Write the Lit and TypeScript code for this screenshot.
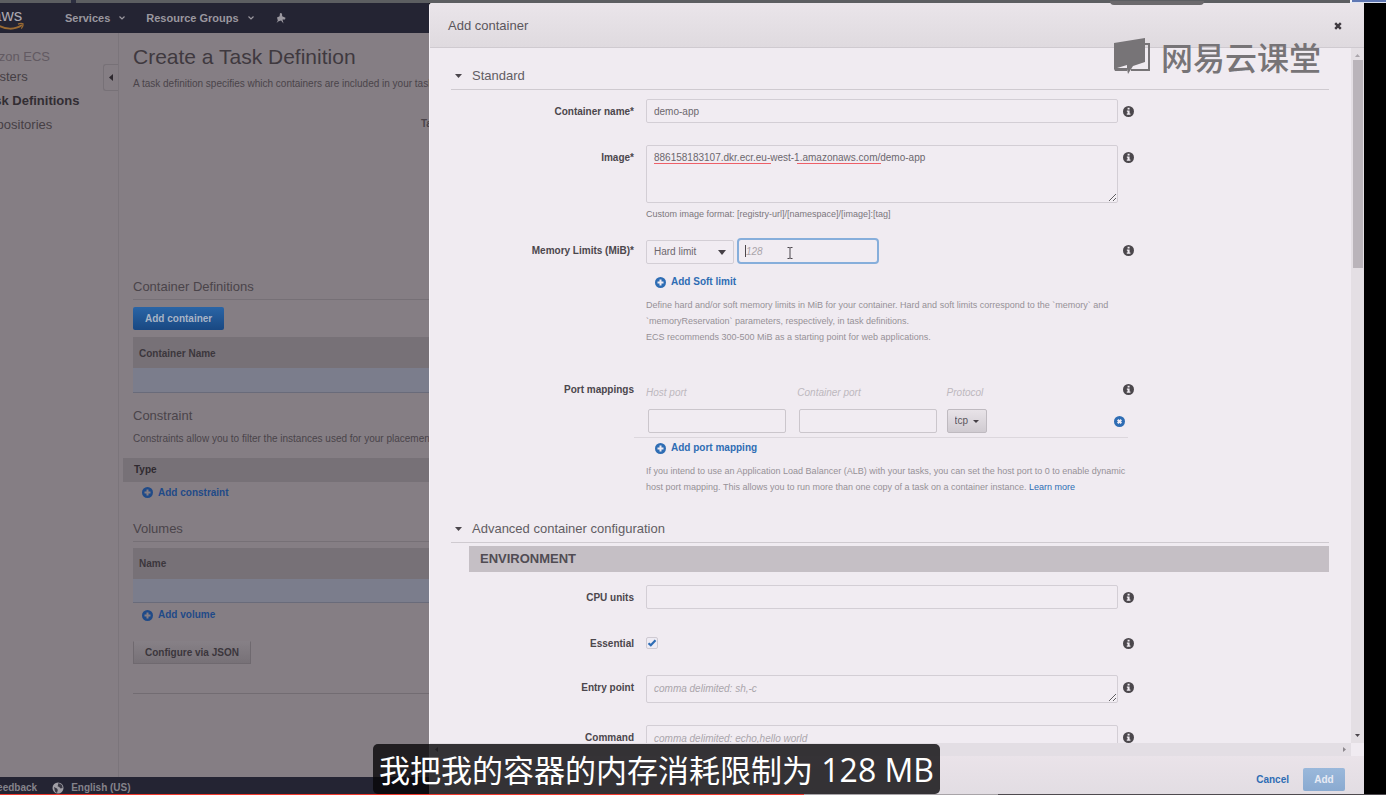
import { LitElement, html, css, svg, nothing } from "lit";
import { customElement, property } from "lit/decorators.js";

const infoIcon = html`<svg class="ico" viewBox="0 0 12 12" aria-hidden="true">
  <circle cx="6" cy="6" r="6" fill="#4b474c"></circle>
  <path fill="#f0ebf1" d="M5 2h2.2v1.8H5zM4.2 4.9h3v3.4h.9v1.3H4.1V8.3H5V6.2h-.8z"></path>
</svg>`;

const plusIcon = html`<svg class="ico" viewBox="0 0 11 11" aria-hidden="true">
  <circle cx="5.5" cy="5.5" r="5.5" fill="currentColor"></circle>
  <path class="hole" d="M5.5 2.5v6M2.500 5.5h6" stroke-width="2"></path>
</svg>`;

const caret = (w: number) => html`<svg class="caret" width=${w} height="5" viewBox="0 0 8 5" preserveAspectRatio="none" aria-hidden="true">
  <path d="M0 0h8L4 5z" fill="currentColor"></path>
</svg>`;

const chevron = html`<svg width="6" height="4" viewBox="0 0 6 4" aria-hidden="true">
  <path d="M.5.5 3 3 5.5.5" fill="none" stroke="currentColor" stroke-width="1.2"></path>
</svg>`;

const shared = css`
  * { box-sizing: border-box; }
  button, input, textarea, select { font: inherit; color: inherit; margin: 0; }
  button { border: 0; padding: 0; background: none; cursor: pointer; }
  a { text-decoration: none; color: inherit; }
  svg { display: block; flex: none; }
  .ico { width: 11px; height: 11px; }
  .add { display: flex; align-items: center; gap: 5px; height: 16px; padding-left: 9px; font-weight: 700; }
`;

@customElement("console-page")
export class ConsolePage extends LitElement {
  static styles = [shared, css`
    :host {
      display: grid; grid-template-rows: 30px minmax(0, 1fr) 17px;
      min-width: 0; overflow: hidden; white-space: nowrap;
      background: #857e84; color: #4a444a; font-size: 10px; line-height: 16px;
    }
    .nav { display: flex; align-items: center; background: #242433; color: #9a979f; font-size: 11px; font-weight: 700; }
    .brand { width: 65px; }
    .brand svg { width: 25px; height: 24px; }
    .nav button { display: flex; align-items: center; gap: 9px; font-weight: 700; }
    .nav .groups { margin-left: 21px; }
    .nav .pin { margin-left: 22px; }
    .middle { display: flex; min-height: 0; }
    .side { display: flex; width: 119px; flex: none; border-right: 1px solid #7b757b; }
    .menu { flex: 1; margin: 16px 0 0 -20px; font-size: 13px; color: #453f45; }
    .menu a { display: block; line-height: 16px; margin-bottom: 8px; }
    .menu .service { margin: 0 0 4px -8px; color: #625a62; }
    .menu .current { font-weight: 700; color: #322d33; }
    .fold { display: flex; align-items: center; justify-content: center; width: 15px; height: 27px; margin-top: 31px; border: 1px solid #777177; border-right: 0; border-radius: 3px 0 0 3px; }
    .content { flex: 1; min-width: 0; padding: 12px 0 0 14px; }
    h1 { margin: 0; font-size: 21px; line-height: 24px; font-weight: 400; color: #3f393f; }
    h2 { margin: 0; font-size: 13px; line-height: 20px; font-weight: 400; }
    p { margin: 0; }
    .intro { margin-top: 7px; }
    .peek { margin: 24px 0 145px 288px; font-weight: 700; }
    .ruled { padding-bottom: 2px; border-bottom: 1px solid #767076; }
    .primary { margin: 7px 0; height: 23px; padding: 0 12px; border-radius: 2px; font-weight: 700; color: #a8b4c6; background: linear-gradient(#2a65a6, #194882); }
    .plain { margin-top: 18px; height: 23px; padding: 0 11px; font-weight: 700; color: #3b363c; background: linear-gradient(#868086, #777177); border: 1px solid #6f696f; border-top-color: #868086; }
    table { width: 100%; border-collapse: collapse; }
    th { height: 31px; padding: 2px 6px 0; text-align: left; background: #777177; color: #3c373d; }
    td { height: 24px; padding: 0; background: #7b7d8c; border-bottom: 1px solid #696b7a; }
    .constraint { margin-top: 13px; }
    .constraint + p { margin: 5px 0 11px; }
    .wide { width: auto; margin-left: -10px; min-width: calc(100% + 10px); }
    .wide th { height: 24px; padding: 0 11px; color: #2f2a30; }
    .add { color: #1f4a88; }
    .hole { stroke: #857e84; }
    .after-type { margin: 3px 0 18px; }
    .volumes { margin-bottom: 6px; padding-bottom: 2px; }
    .after-volumes { margin-top: 4px; }
    .end { margin-top: 29px; border-top: 1px solid #726c72; }
    .foot { display: flex; align-items: flex-start; padding-top: 3px; overflow: hidden; background: #242433; color: #85838b; font-weight: 700; }
    .foot a { margin-left: -9px; }
    .foot svg { margin: 2px 7px 0 15px; width: 12px; height: 12px; }
  `];

  render() {
    return html`
      <header class="nav">
        <a class="brand" href="#" aria-label="aws">
          <svg viewBox="0 0 25 24">
            <text x="-8" y="15" font-size="17" font-weight="400" fill="#aaa6ae">aws</text>
            <path d="M-4 18C5 24 15 24 22 19" fill="none" stroke="#9a6a32" stroke-width="2"></path>
            <path d="M18 18.200c2-.9 4-.9 5-.4.400 1.500-.4 3.400-1.700 4.800" fill="none" stroke="#9a6a32" stroke-width="1.300"></path>
          </svg>
        </a>
        <button>Services ${chevron}</button>
        <button class="groups">Resource Groups ${chevron}</button>
        <button class="pin" aria-label="Pin">
          <svg width="10" height="11" viewBox="0 0 10 11"><path fill="currentColor" d="M4 0 6 .6 6.200 3.200 9.500 4.800 9 6.500 6.500 6.600 7.500 10.500 5 7.600 2.200 8.600.5 10 1.800 7.500 1 4.500 3.600 3.300z"></path></svg>
        </button>
      </header>
      <div class="middle">
        <nav class="side">
          <div class="menu">
            <a class="service" href="#">Amazon ECS</a>
            <a href="#">Clusters</a>
            <a class="current" href="#">Task Definitions</a>
            <a href="#">Repositories</a>
          </div>
          <button class="fold" aria-label="Collapse menu">
            <svg width="4" height="7" viewBox="0 0 4 7"><path d="M4 0v7L0 3.500z" fill="#2d282e"></path></svg>
          </button>
        </nav>
        <main class="content">
          <h1>Create a Task Definition</h1>
          <p class="intro">A task definition specifies which containers are included in your task</p>
          <p class="peek">Task</p>
          <h2 class="ruled">Container Definitions</h2>
          <button class="primary">Add container</button>
          <table><thead><tr><th>Container Name</th></tr></thead><tbody><tr><td></td></tr></tbody></table>
          <h2 class="constraint">Constraint</h2>
          <p>Constraints allow you to filter the instances used for your placement</p>
          <table class="wide"><thead><tr><th>Type</th></tr></thead></table>
          <button class="add after-type">${plusIcon}Add constraint</button>
          <h2 class="ruled volumes">Volumes</h2>
          <table><thead><tr><th>Name</th></tr></thead><tbody><tr><td></td></tr></tbody></table>
          <button class="add after-volumes">${plusIcon}Add volume</button>
          <button class="plain">Configure via JSON</button>
          <div class="end"></div>
        </main>
      </div>
      <footer class="foot">
        <a href="#">Feedback</a>
        <svg viewBox="0 0 12 12" aria-hidden="true">
          <circle cx="6" cy="6" r="5.500" fill="#a19fa6"></circle>
          <path fill="#3a3945" d="M6.500 1 10 3l.6 3-2 .5-1.500-1.500-1.500-.8zM2 5l3 1.500.8 1.500L5 11 3 9.500z"></path>
        </svg>
        <span>English (US)</span>
      </footer>`;
  }
}

@customElement("form-row")
export class FormRow extends LitElement {
  @property() label = "";
  @property({ type: Boolean }) required = false;
  static styles = [shared, css`
    :host { display: grid; grid-template-columns: minmax(0, 195fr) minmax(0, 472fr) minmax(0, 211fr); }
    .label { padding-right: 12px; text-align: right; line-height: 26px; height: 24px; font-weight: 700; color: #4b464c; white-space: nowrap; }
    .info { display: flex; align-items: center; width: 11px; height: 24px; margin-left: 5px; }
  `];
  render() {
    return html`
      <div class="label">${this.label}${this.required ? "*" : nothing}</div>
      <slot></slot>
      <button class="info" aria-label=${"About " + this.label}>${infoIcon}</button>`;
  }
}

@customElement("container-drawer")
export class ContainerDrawer extends LitElement {
  static styles = [shared, css`
    :host {
      display: grid; grid-template-rows: 45px minmax(0, 1fr) 38px; min-width: 0; min-height: 0;
      background: #f0ebf1; color: #6c676d; font-size: 10px; line-height: 16px;
      border-left: 1px solid #f6f2f7; border-radius: 3px 0 0 0; overflow: hidden;
    }
    .top { display: flex; align-items: center; justify-content: space-between; padding: 2px 22px 0 18px; background: linear-gradient(#eae5ea, #dfdadf); border-bottom: 1px solid #cfcad0; }
    .top h1 { margin: 0; font-size: 13px; font-weight: 400; color: #5b565c; }
    .scroller { display: grid; grid-template: minmax(0, 1fr) 13px / minmax(0, 1fr) 13px; min-height: 0; }
    .body { overflow: hidden; padding: 0 22px 0 21px; }
    .section { display: flex; align-items: center; height: 42px; padding: 14px 0 0 4px; border-bottom: 1px solid #cfcad0; }
    .section { gap: 10px; }
    .section button { color: #4b464c; }
    .section h2 { margin: 0; font-size: 13px; line-height: 20px; font-weight: 400; color: #625d63; }
    .caret { width: 7px; height: 4px; }
    .r-name { margin-top: 9px; }
    .r-image { margin-top: 22px; }
    .r-memory { margin-top: 16px; }
    .r-ports { margin-top: 32px; }
    .r-cpu { margin-top: 13px; }
    .r-essential { margin-top: 22px; }
    .r-entry { margin-top: 20px; }
    .r-command { margin-top: 22px; }
    .text { display: block; width: 100%; height: 24px; padding: 0 7px; border: 1px solid #d3ced5; border-radius: 2px; background: #f1ecf2; outline: 0; }
    .area { height: 28px; padding: 5px 7px; resize: vertical; overflow: hidden; }
    .image {
      height: 58px; padding: 4px 7px;
      background-image: linear-gradient(#ee5f68, #ee5f68), linear-gradient(#ee5f68, #ee5f68);
      background-size: 117px 1px, 84px 1px; background-position: 7px 17px, 150px 17px; background-repeat: no-repeat;
    }
    ::placeholder { color: #aaa5ab; font-style: italic; opacity: 1; }
    .note { margin: 3px 0 0; font-size: 9px; color: #7b767c; }
    .help { margin: 7px 0 0; font-size: 9px; color: #969197; white-space: nowrap; }
    .help a, .add { color: #2e6db4; }
    .hole { stroke: #f0ebf1; }
    .memory { display: flex; align-items: flex-end; gap: 3px; }
    .pick { display: grid; align-items: center; width: 88px; height: 24px; }
    .pick > * { grid-area: 1 / 1; }
    .pick .caret { justify-self: end; width: 8px; height: 5px; margin-right: 8px; color: #454046; pointer-events: none; }
    select { appearance: none; width: 100%; height: 100%; padding: 0 7px; border: 1px solid #d3ced5; border-radius: 2px; background: #f1ecf2; }
    .amount { position: relative; width: 142px; }
    .amount .text { height: 26px; border: 2px solid #86aedb; border-radius: 4px; padding: 0 7px; }
    .amount .cursor { position: absolute; left: 8px; top: 7px; width: 1px; height: 12px; background: #4b464c; }
    .amount .beam { position: absolute; left: 50px; top: 9px; }
    .soft { margin-top: 10px; }
    .ports { display: grid; grid-template-columns: minmax(0, 151fr) minmax(0, 149fr) minmax(0, 181fr); margin: 8px -10px 0 -12px; padding: 0 0 4px 12px; border-bottom: 1px solid #dcd7dd; }
    .port label { display: block; font-style: italic; color: #bdb8be; }
    .port .text { width: 138px; max-width: 92%; margin: 8px 0 0 2px; border-color: #cbc6cc; }
    .proto { display: flex; align-items: center; justify-content: space-between; margin-top: 8px; padding-right: 3px; }
    .proto .pick { width: 40px; }
    .proto select { color: #5b565c; background: linear-gradient(#e8e3e8, #d0cbd1); border-color: #bfbac0; }
    .proto .caret { width: 6px; height: 3px; }
    .remove { color: #2e6db4; }
    .map { margin-top: 2px; }
    .second { margin-top: 6px; }
    .band { margin: 3px 0 0 18px; height: 26px; padding: 0 11px; font-size: 13px; line-height: 26px; color: #514c53; background: #c5bfc5; }
    .tick { display: grid; align-items: center; width: 12px; height: 24px; }
    .tick > * { grid-area: 1 / 1; }
    .tick input { appearance: none; width: 12px; height: 12px; border: 1px solid #cfcad2; border-radius: 2px; background: #eeebf3; }
    .tick svg { pointer-events: none; }
    .vbar { display: flex; flex-direction: column; align-items: center; padding: 5px 0; background: #e4dfe4; color: #aaa5ab; }
    .vbar .thumb { width: 10px; height: 208px; margin: 3px 0 auto; background: #bab4ba; }
    .hbar { display: flex; align-items: center; justify-content: space-between; padding: 0 5px; background: #e3dee4; color: #8c878d; }
    .bottom { display: flex; align-items: flex-end; justify-content: flex-end; gap: 14px; padding: 0 19px 3px 0; background: linear-gradient(#eae3e9, #e2dde3); font-weight: 700; line-height: 23px; }
    .bottom button { font-weight: 700; }
    .cancel { color: #2e6db4; }
    .bottom .submit { width: 42px; height: 23px; border-radius: 2px; color: #e8ebf4; background: linear-gradient(#9ab8db, #8aaad0); }
  `];

  render() {
    return html`
      <header class="top">
        <h1>Add container</h1>
        <button aria-label="Close"><svg width="8" height="8" viewBox="0 0 8 8"><path d="M1.200 1.200 6.800 6.800M6.800 1.200 1.200 6.800" stroke="#3f3a40" stroke-width="2.400"></path></svg></button>
      </header>
      <div class="scroller">
        <div class="body">
          <div class="section"><button aria-label="Toggle Standard">${caret(7)}</button><h2>Standard</h2></div>
          <form-row class="r-name" label="Container name" required>
            <input class="text" aria-label="Container name" .value=${"demo-app"}>
          </form-row>
          <form-row class="r-image" label="Image" required>
            <div>
              <textarea class="text image" aria-label="Image" spellcheck="false" .value=${"886158183107.dkr.ecr.eu-west-1.amazonaws.com/demo-app"}></textarea>
              <p class="note">Custom image format: [registry-url]/[namespace]/[image]:[tag]</p>
            </div>
          </form-row>
          <form-row class="r-memory" label="Memory Limits (MiB)" required>
            <div>
              <div class="memory">
                <span class="pick"><select aria-label="Limit type"><option>Hard limit</option></select>${caret(8)}</span>
                <span class="amount">
                  <input class="text" aria-label="Memory limit" placeholder="128">
                  <span class="cursor"></span>
                  <svg class="beam" width="6" height="12" viewBox="0 0 6 12" aria-hidden="true"><path d="M.5.5h1.800L3 1l.7-.5h1.800M.5 11.500h1.800L3 11l.7.5h1.800M3 1v10" fill="none" stroke="#4b464c"></path></svg>
                </span>
              </div>
              <button class="add soft">${plusIcon}Add Soft limit</button>
              <p class="help">Define hard and/or soft memory limits in MiB for your container. Hard and soft limits correspond to the \`memory\` and<br>\`memoryReservation\` parameters, respectively, in task definitions.<br>ECS recommends 300-500 MiB as a starting point for web applications.</p>
            </div>
          </form-row>
          <form-row class="r-ports" label="Port mappings">
            <div>
              <div class="ports">
                <div class="port"><label for="host">Host port</label><input class="text" id="host"></div>
                <div class="port"><label for="inner">Container port</label><input class="text" id="inner"></div>
                <div class="port">
                  <label for="protocol">Protocol</label>
                  <div class="proto">
                    <span class="pick"><select id="protocol"><option>tcp</option></select>${caret(6)}</span>
                    <button class="remove" aria-label="Remove mapping"><svg class="ico" viewBox="0 0 11 11"><circle cx="5.500" cy="5.500" r="5.500" fill="currentColor"></circle><path class="hole" d="M3.700 3.700l3.600 3.600M7.300 3.700l-3.600 3.600" stroke-width="2"></path></svg></button>
                  </div>
                </div>
              </div>
              <button class="add map">${plusIcon}Add port mapping</button>
              <p class="help">If you intend to use an Application Load Balancer (ALB) with your tasks, you can set the host port to 0 to enable dynamic<br>host port mapping. This allows you to run more than one copy of a task on a container instance. <a href="#">Learn more</a></p>
            </div>
          </form-row>
          <div class="section second"><button aria-label="Toggle Advanced container configuration">${caret(7)}</button><h2>Advanced container configuration</h2></div>
          <h3 class="band">ENVIRONMENT</h3>
          <form-row class="r-cpu" label="CPU units"><input class="text" aria-label="CPU units"></form-row>
          <form-row class="r-essential" label="Essential">
            <span class="tick">
              <input type="checkbox" aria-label="Essential" checked>
              <svg width="12" height="12" viewBox="0 0 12 12" aria-hidden="true"><path d="M2.500 6.200 4.800 8.300 9.500 3.300" fill="none" stroke="#2f6db5" stroke-width="2.200"></path></svg>
            </span>
          </form-row>
          <form-row class="r-entry" label="Entry point"><textarea class="text area" aria-label="Entry point" placeholder="comma delimited: sh,-c"></textarea></form-row>
          <form-row class="r-command" label="Command"><textarea class="text area" aria-label="Command" placeholder="comma delimited: echo,hello world"></textarea></form-row>
        </div>
        <div class="vbar">
          <svg width="5" height="4" viewBox="0 0 5 4"><path d="M0 4h5L2.500 1z" fill="currentColor"></path></svg>
          <div class="thumb"></div>
          <svg width="5" height="4" viewBox="0 0 5 4"><path d="M0 0h5L2.500 3z" fill="#4b464c"></path></svg>
        </div>
        <div class="hbar">
          <svg width="3" height="5" viewBox="0 0 3 5"><path d="M3 0v5L0 2.500z" fill="currentColor"></path></svg>
          <svg width="3" height="5" viewBox="0 0 3 5"><path d="M0 0v5l3-2.500z" fill="currentColor"></path></svg>
        </div>
      </div>
      <footer class="bottom">
        <button class="cancel">Cancel</button>
        <button class="submit">Add</button>
      </footer>`;
  }
}

@customElement("app-root")
export class AppRoot extends LitElement {
  static styles = css`
    :host {
      display: grid; grid-template-rows: 3px minmax(0, 1fr) 1px; position: relative;
      height: 100vh; overflow: hidden; background: #000;
      font-family: "Liberation Sans", Arial, sans-serif;
    }
    .strip { display: flex; background: #5c5e61; }
    .tab { width: 71px; border-right: 5px solid #2c2e40; box-sizing: content-box; }
    .edge { width: 36px; margin-left: auto; border-left: 2px solid #f4f4f8; border-bottom: 1px solid #dfe4f2; background: #5f78b4; box-sizing: border-box; }
    .stage { display: grid; grid-template-columns: minmax(0, 429fr) minmax(0, 935fr); margin-right: 22px; min-height: 0; }
    .progress { display: flex; background: #4e4a4f; }
    .played { width: 58%; background: #f03a2e; }
    .loaded { width: 14%; background: #a8a4a8; }
    .shade { position: absolute; top: 1px; right: 182px; width: 94px; height: 4px; border-radius: 0 0 4px 4px; background: #6b696c; }
    .mark { position: absolute; top: 36px; right: 65px; display: flex; align-items: center; gap: 11px; color: #777477; font: 500 32px/40px "Noto Sans CJK SC", sans-serif; }
    .mark svg { display: block; }
    .caption {
      position: absolute; left: 373px; bottom: 1px; height: 50px; padding: 0 6px; border-radius: 5px;
      background: rgba(8, 6, 9, 0.8); color: #fff; font: 400 31px/50px "Noto Sans CJK SC", sans-serif; white-space: nowrap;
    }
    .latin { font-family: "Open Sans", sans-serif; font-size: 32px; }
  `;

  render() {
    return html`
      <div class="strip"><span class="tab"></span><span class="edge"></span></div>
      <div class="stage">
        <console-page></console-page>
        <container-drawer></container-drawer>
      </div>
      <div class="progress"><span class="played"></span><span class="loaded"></span></div>
      <div class="shade"></div>
      <div class="mark">
        <svg width="36" height="36" viewBox="0 0 36 36" aria-hidden="true">
          ${svg`<path d="M0 5 31 0v24l-12 4-5 8-1-5-12 2-1-2z" fill="currentColor"></path>
          <path d="M31 6h4v26H17M13 32H1" fill="none" stroke="currentColor" stroke-width="2"></path>
          <path d="M3 30l10-3v3z" fill="#f0ebf1"></path>`}
        </svg>
        <span>网易云课堂</span>
      </div>
      <div class="caption">我把我的容器的内存消耗限制为<span class="latin"> 128 MB</span></div>`;
  }
}
